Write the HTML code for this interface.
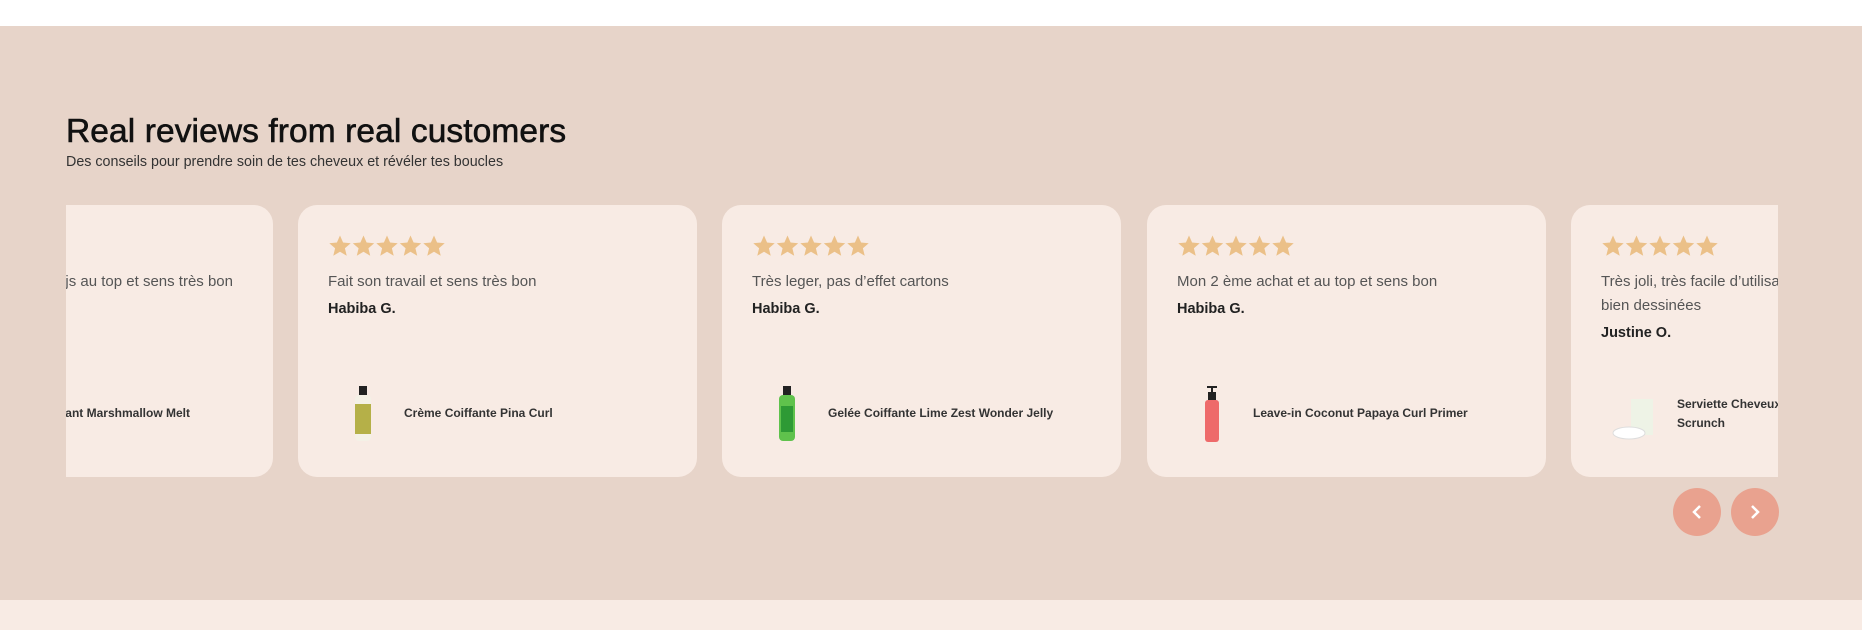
<!DOCTYPE html>
<html><head><meta charset="utf-8"><style>
*{margin:0;padding:0;box-sizing:border-box}
body{width:1862px;height:630px;overflow:hidden;background:#fff;font-family:"Liberation Sans",sans-serif;position:relative}
.sec{position:absolute;left:0;top:26px;width:1862px;height:574px;background:#e7d4c9}
.foot{position:absolute;left:0;top:600px;width:1862px;height:30px;background:#f8ebe4}
h2{position:absolute;left:66px;top:113px;font-size:33.5px;font-weight:400;color:#111;letter-spacing:0.1px;-webkit-text-stroke:0.6px #111}
.sub{position:absolute;left:66px;top:154px;font-size:14.3px;color:#333}
.track{position:absolute;left:66px;top:205px;width:1712px;height:272px;overflow:hidden}
.card{position:absolute;top:0;width:399px;height:272px;background:#f8ebe4;border-radius:19px}
.stars{position:absolute;left:30px;top:29px;height:24px}
.txt{position:absolute;left:30px;top:65px;width:360px;font-size:15px;color:#555;line-height:23.7px;white-space:nowrap}
.name{position:absolute;left:30px;top:96px;font-size:14.5px;font-weight:700;color:#222}
.prod{position:absolute;left:106px;top:199px;font-size:12px;font-weight:700;color:#333;line-height:19px;white-space:nowrap}
.img{position:absolute;left:52px;top:181px;width:26px;height:56px}
.btn{position:absolute;top:488px;width:48px;height:48px;border-radius:50%;background:#e9a28f}
</style></head><body>
<svg width="0" height="0" style="position:absolute"><defs><symbol id="s" viewBox="0 0 24 24"><path d="M12 1.5l3.1 7 7.6.7-5.8 5 1.8 7.5L12 17.8l-6.7 3.9 1.8-7.5-5.8-5 7.6-.7z" fill="#ebc088"/></symbol></defs></svg>
<div class="sec"></div><div class="foot"></div>
<h2>Real reviews from real customers</h2>
<div class="sub">Des conseils pour prendre soin de tes cheveux et révéler tes boucles</div>
<div class="track">
 <div class="card" style="left:-192px">
  <div class="txt" style="left:auto;right:40px;width:auto;text-align:right">Mon 3 ème achat et toujs au top et sens très bon</div>
  <div class="prod" style="left:auto;right:83px;text-align:right">Crème Coiffant Marshmallow Melt</div>
 </div>
 <div class="card" style="left:232px">
  <div class="stars"><svg width="120" height="24"><use href="#s" x="0" width="24" height="24"/><use href="#s" x="23.5" width="24" height="24"/><use href="#s" x="47" width="24" height="24"/><use href="#s" x="70.5" width="24" height="24"/><use href="#s" x="94" width="24" height="24"/></svg></div>
  <div class="txt">Fait son travail et sens très bon</div>
  <div class="name">Habiba G.</div>
  <svg class="img" viewBox="0 0 26 56"><rect x="9" y="0" width="8" height="9" fill="#222"/><rect x="5" y="9" width="16" height="46" rx="4" fill="#f4f1e6"/><rect x="5" y="18" width="16" height="30" fill="#b5b048"/></svg>
  <div class="prod">Crème Coiffante Pina Curl</div>
 </div>
 <div class="card" style="left:656px">
  <div class="stars"><svg width="120" height="24"><use href="#s" x="0" width="24" height="24"/><use href="#s" x="23.5" width="24" height="24"/><use href="#s" x="47" width="24" height="24"/><use href="#s" x="70.5" width="24" height="24"/><use href="#s" x="94" width="24" height="24"/></svg></div>
  <div class="txt">Très leger, pas d’effet cartons</div>
  <div class="name">Habiba G.</div>
  <svg class="img" viewBox="0 0 26 56"><rect x="9" y="0" width="8" height="9" fill="#222"/><rect x="5" y="9" width="16" height="46" rx="4" fill="#5fc24c"/><rect x="7" y="20" width="12" height="26" fill="#2e9a35"/></svg>
  <div class="prod">Gelée Coiffante Lime Zest Wonder Jelly</div>
 </div>
 <div class="card" style="left:1081px">
  <div class="stars"><svg width="120" height="24"><use href="#s" x="0" width="24" height="24"/><use href="#s" x="23.5" width="24" height="24"/><use href="#s" x="47" width="24" height="24"/><use href="#s" x="70.5" width="24" height="24"/><use href="#s" x="94" width="24" height="24"/></svg></div>
  <div class="txt">Mon 2 ème achat et au top et sens bon</div>
  <div class="name">Habiba G.</div>
  <svg class="img" viewBox="0 0 26 56"><path d="M8 1h10M13 1v6" stroke="#222" stroke-width="2"/><rect x="9" y="6" width="8" height="8" fill="#222"/><rect x="6" y="14" width="14" height="42" rx="3" fill="#ee6a6a"/></svg>
  <div class="prod">Leave-in Coconut Papaya Curl Primer</div>
 </div>
 <div class="card" style="left:1505px">
  <div class="stars"><svg width="120" height="24"><use href="#s" x="0" width="24" height="24"/><use href="#s" x="23.5" width="24" height="24"/><use href="#s" x="47" width="24" height="24"/><use href="#s" x="70.5" width="24" height="24"/><use href="#s" x="94" width="24" height="24"/></svg></div>
  <div class="txt">Très joli, très facile d’utilisation, les illustrations<br>bien dessinées</div>
  <div class="name" style="top:120px">Justine O.</div>
  <svg class="img" style="left:40px;top:192px;width:46px;height:44px" viewBox="0 0 46 44"><rect x="20" y="2" width="22" height="36" fill="#eef3e6"/><ellipse cx="18" cy="36" rx="16" ry="6" fill="#fff" stroke="#ddd"/></svg>
  <div class="prod" style="top:190px">Serviette Cheveux<br>Scrunch</div>
 </div>
</div>
<div class="btn" style="left:1673px"><svg width="48" height="48" viewBox="0 0 48 48"><path d="M27 18l-6 6 6 6" stroke="#fff" stroke-width="2.5" fill="none"/></svg></div>
<div class="btn" style="left:1731px"><svg width="48" height="48" viewBox="0 0 48 48"><path d="M21 18l6 6-6 6" stroke="#fff" stroke-width="2.5" fill="none"/></svg></div>
</body></html>
